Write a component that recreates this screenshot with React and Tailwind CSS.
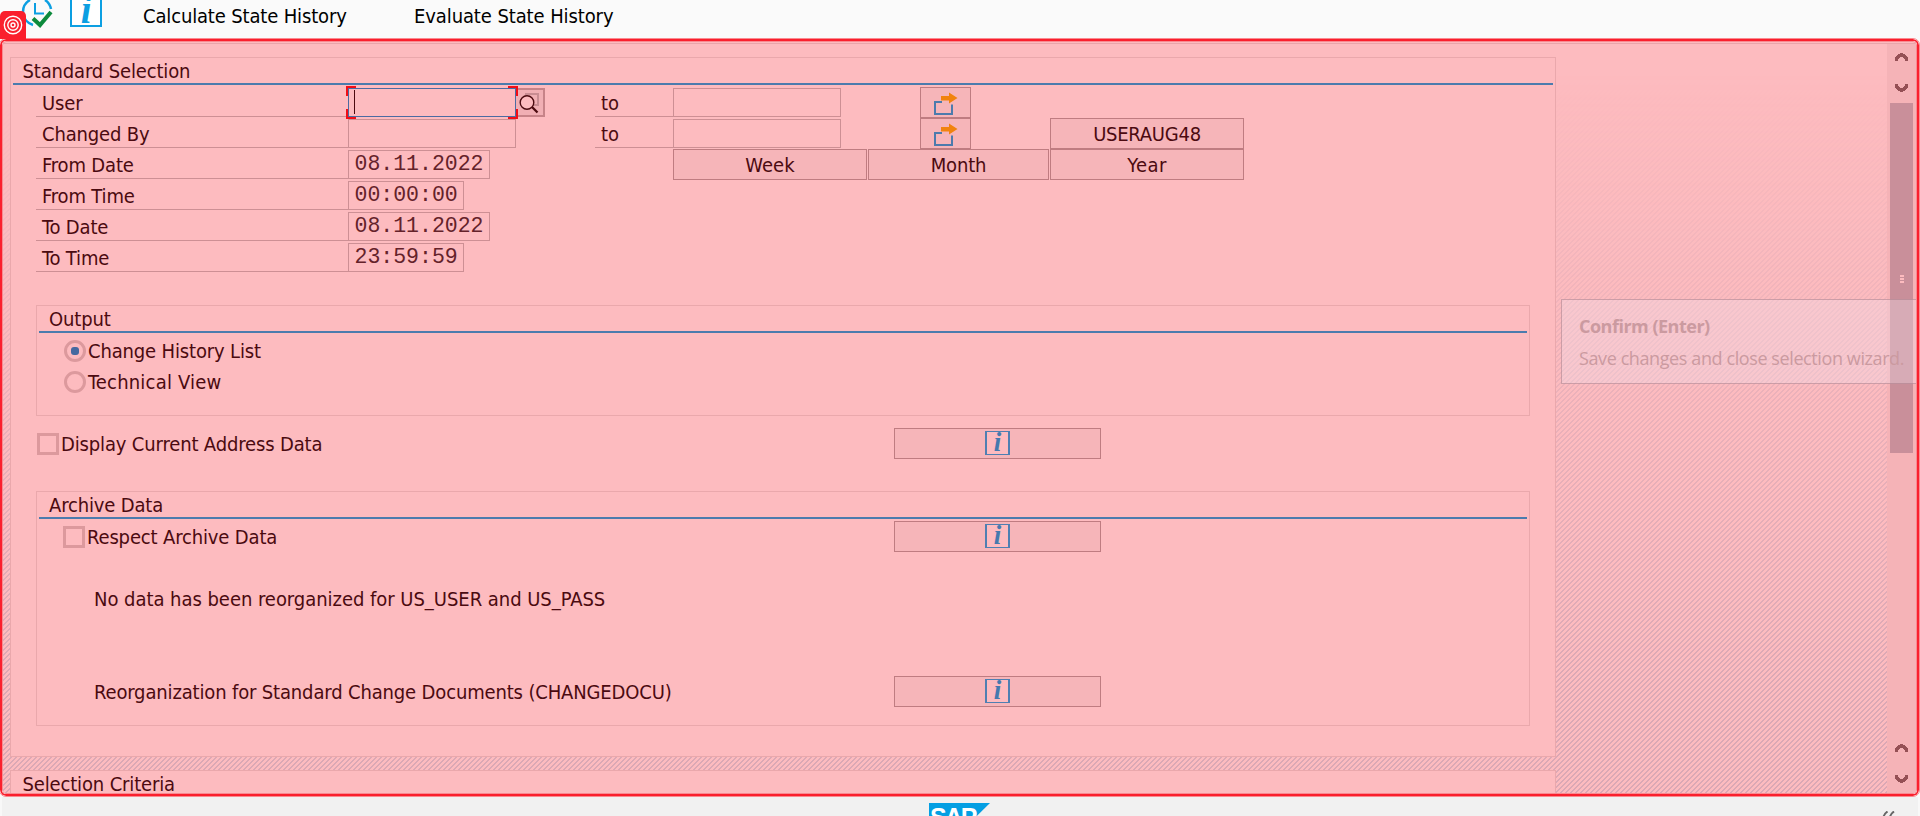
import React from "react";

const line = "border-[#cd8f94]";
const group = "border-[#eaa8ac]";

function Label({ children, className = "" }) {
  return <span className={`block whitespace-nowrap leading-[24px] ${className}`}>{children}</span>;
}

/* Caption cell of a selection row, underlined up to the input field */
function Caption({ children, className = "w-[312px]" }) {
  return (
    <div className={`h-[30px] shrink-0 border-b ${line} pl-1.5 pt-1 ${className}`}>
      <Label>{children}</Label>
    </div>
  );
}

function Field({ children, className = "w-[168px]" }) {
  return (
    <div className={`mt-[1px] h-[29px] shrink-0 whitespace-nowrap border ${line} pl-[5.5px] font-['Liberation_Mono',monospace] text-[21.5px] leading-[27px] tracking-normal text-[#64222a] ${className}`}>
      {children}
    </div>
  );
}

function Button({ children, className = "" }) {
  return (
    <div className={`flex h-[31px] shrink-0 items-center justify-center whitespace-nowrap border border-[#bf7c81] bg-[#f6b5b9] ${className}`}>
      {children}
    </div>
  );
}

function ShareButton() {
  return (
    <Button className="ml-[79px] w-[51px]">
      <svg width="26" height="26" viewBox="0 0 26 26" className="mt-0.5 shrink-0">
        <path d="M9 11H2v12h17v-9.500" fill="none" stroke="#4c7bad" strokeWidth="2" />
        <path d="M8 5h8V1.500l8.500 5.500-8.500 5.500V9.500H8z" fill="#f1830f" />
      </svg>
    </Button>
  );
}

function InfoButton() {
  return (
    <Button className="w-[207px]">
      <span className="mb-[1px] flex h-6 w-[25px] items-center justify-center border-2 border-y-[1px] border-[#4f7fb2] bg-[#fdbbbf] font-['Liberation_Serif',serif] text-[27px] font-bold italic leading-none text-[#4679ae]">
        <span className="-mt-0.5">i</span>
      </span>
    </Button>
  );
}

function Group({ title, className = "", children }) {
  return (
    <section className={`w-[1494px] border ${group} ${className}`}>
      <div className="ml-0.5 h-[27px] w-[1488px] border-b-2 border-[#4c7bad] pl-[10px] pt-[0.5px]">
        <Label>{title}</Label>
      </div>
      {children}
    </section>
  );
}

function Radio({ checked, children }) {
  return (
    <div className="flex h-[31px] items-center gap-[2px] pl-[27px]">
      <span className="flex size-[22px] items-center justify-center rounded-full border-[3px] border-[#dc999d]">
        {checked && <span className="size-2 rounded-[3px] bg-[#4669a0]" />}
      </span>
      {children}
    </div>
  );
}

function Check({ children, className = "" }) {
  return (
    <div className={`flex items-center gap-[2px] ${className}`}>
      <span className="size-[22px] border-[3px] border-[#dc999d]" />
      <Label className="tracking-[-0.15px]">{children}</Label>
    </div>
  );
}

function Chevron({ down }) {
  return (
    <svg width="13" height="8" viewBox="0 0 13 8" shapeRendering="crispEdges" className={`block shrink-0 ${down ? "rotate-180" : ""}`}>
      <path d="M5 0h3v1h2v1h1v1h1v1h1v4h-3V6H9V5H8V4H5v1H4v1H3v2H0V4h1V3h1V2h1V1h2z" fill="#955055" />
    </svg>
  );
}

function FocusedField() {
  return (
    <div className="relative z-10 mt-[1px] h-[29px] w-[168px] shrink-0 border border-[#4c6ba2] bg-[#fdbbbf] pl-[5px] pt-[1px]">
      <div className="h-6 w-[1px] bg-[#4b0a10]" />
      <svg width="172" height="33" viewBox="0 0 172 33" className="absolute -left-[3px] -top-[3px]" shapeRendering="crispEdges">
        <path d="M1 10V1H10M162 1h9V10M171 23v9H162M10 32H1v-9" fill="none" stroke="#f20d17" strokeWidth="2" />
      </svg>
    </div>
  );
}

function SearchHelp() {
  return (
    <div className="mt-[1px] h-[29px] w-[29px] shrink-0 border-2 border-l-0 border-[#c78388] bg-[#f1afb4]">
      <svg width="27" height="25" viewBox="0 0 27 25" fill="none" className="block">
        <path d="M10 8V4h12v11h-5" stroke="#c98c92" strokeWidth="2" />
        <circle cx="11" cy="12.500" r="6.800" stroke="#4b0a10" strokeWidth="1.400" fill="#fdbbbf" />
        <path d="M16 17l5.500 5.500" stroke="#4b0a10" strokeWidth="2.300" />
      </svg>
    </div>
  );
}

const times = [
  ["From Time", "00:00:00", "w-[116px]"],
  ["To Date", "08.11.2022", "w-[142px]"],
  ["To Time", "23:59:59", "w-[116px]"],
];

export default function App() {
  return (
    <div className="relative flex h-[816px] w-[1920px] flex-col overflow-hidden bg-[#fafafa] font-['DejaVu_Sans_Condensed','DejaVu_Sans',sans-serif] text-[20px] tracking-[-0.15px] text-[#4b0a10] [font-stretch:condensed]">
      <header className="flex h-[38px] shrink-0 text-black">
        <svg width="36" height="30" viewBox="0 0 36 30" className="ml-[20px] shrink-0">
          <path d="M13 25A14 14 0 0 1 3 13A14 14 0 0 1 10 0M25 0A14 14 0 0 1 31 9" fill="none" stroke="#0c9fe2" strokeWidth="2.500" />
          <path d="M15 3v10.500h9" fill="none" stroke="#0c9fe2" strokeWidth="2" />
          <path d="M13 18.500l7 6.500L31 12" fill="none" stroke="#0c8a3c" strokeWidth="4" />
        </svg>
        <div className="ml-[14px] flex h-[27px] w-[32px] shrink-0 items-end justify-center border-2 border-t-0 border-[#0c9fe2] bg-white font-['Liberation_Serif',serif] text-[39px] font-bold italic leading-[31px] text-[#0c9fe2]">
          i
        </div>
        <Label className="ml-[41px] w-[271px] pt-1">Calculate State History</Label>
        <Label className="pt-1 tracking-[-0.1px]">Evaluate State History</Label>
      </header>

      <main className="relative -ml-[1px] h-[759px] w-[1921px] shrink-0 overflow-hidden rounded-[7px] border border-[#f98a90]">
        <div className="h-full overflow-hidden rounded-[6px] border-2 border-[#fa1f2d]">
          <div className="relative flex h-full overflow-hidden rounded-[4px] border border-[#f88a91] bg-[#fdbbbf]">
            <div className="absolute inset-0 bg-[repeating-linear-gradient(135deg,#fdbbbf_0,#fdbbbf_1.6px,#dba8b5_1.6px,#dba8b5_3.5355px)] [mask-image:linear-gradient(to_bottom,transparent_30px,black_640px)]" />
            <div className="relative mt-[1px] w-[1884px] shrink-0 border-t border-[#e8a5aa] pl-[7px] pt-[13px]">
              <section className={`h-[700px] w-[1546px] border ${group} bg-[#fdbbbf]`}>
                <div className="ml-0.5 h-[27px] w-[1540px] border-b-2 border-[#4c7bad] pl-[9.5px] pt-[0.5px]">
                  <Label>Standard Selection</Label>
                </div>
                <div className="flex flex-col pl-[25px] pt-[2px]">
                  <div className="flex h-[31px]">
                    <div className="flex w-[559px]">
                      <Caption>User</Caption>
                      <FocusedField />
                      <SearchHelp />
                    </div>
                    <Caption className="w-[78px]">to</Caption>
                    <Field />
                    <ShareButton />
                  </div>
                  <div className="flex h-[31px]">
                    <div className="flex w-[559px]">
                      <Caption>Changed By</Caption>
                      <Field />
                    </div>
                    <Caption className="w-[78px]">to</Caption>
                    <Field />
                    <ShareButton />
                    <Button className="ml-[79px] w-[194px] tracking-[-0.25px]">USERAUG48</Button>
                  </div>
                  <div className="flex h-[31px]">
                    <div className="flex w-[637px]">
                      <Caption>From Date</Caption>
                      <Field className="w-[142px]">08.11.2022</Field>
                    </div>
                    <div className="flex gap-[1px]">
                      <Button className="w-[194px] tracking-[0.1px]">Week</Button>
                      <Button className="w-[181px]">Month</Button>
                      <Button className="w-[194px] tracking-[0.4px]">Year</Button>
                    </div>
                  </div>
                  {times.map(([name, value, width]) => (
                    <div key={name} className="flex h-[31px]">
                      <Caption>{name}</Caption>
                      <Field className={width}>{value}</Field>
                    </div>
                  ))}

                  <Group title="Output" className="mt-8 h-[111px] pb-4">
                    <div className="pt-[2px]">
                      <Radio checked>
                        <Label>Change History List</Label>
                      </Radio>
                      <Radio>
                        <Label className="tracking-[0.2px]">Technical View</Label>
                      </Radio>
                    </div>
                  </Group>

                  <div className="mt-3 flex pl-[1px]">
                    <Check className="w-[857px]">Display Current Address Data</Check>
                    <InfoButton />
                  </div>

                  <Group title="Archive Data" className="mt-8 h-[235px]">
                    <div className="flex pl-[26px] pt-[2px]">
                      <Check className="w-[831px]">Respect Archive Data</Check>
                      <InfoButton />
                    </div>
                    <div className="mt-[31px] flex h-[31px] items-center pl-[57px]">
                      <Label className="tracking-[-0.04px]">No data has been reorganized for US_USER and US_PASS</Label>
                    </div>
                    <div className="mt-[62px] flex items-center pl-[57px]">
                      <Label className="w-[800px]">Reorganization for Standard Change Documents (CHANGEDOCU)</Label>
                      <InfoButton />
                    </div>
                  </Group>
                </div>
              </section>
              <section className={`mt-[13px] h-[60px] w-[1546px] border ${group} bg-[#fdbbbf] pl-[11.5px] pt-[1px]`}>
                <Label>Selection Criteria</Label>
              </section>
            </div>

            <div className="relative mt-[1px] flex w-[29px] shrink-0 flex-col items-center border-t border-[#e8a5aa] bg-[#f5b3b7] pb-[10px] pt-[9px]">
              <Chevron />
              <div className="mt-[23px]">
                <Chevron down />
              </div>
              <div className="mt-[11px] flex h-[350px] w-[23px] flex-col items-center justify-center gap-[1px] bg-[#c98f9a] pt-0.5">
                <div className="h-0.5 w-1 bg-[#fdbbbf]" />
                <div className="h-0.5 w-1 bg-[#fdbbbf]" />
                <div className="h-0.5 w-1 bg-[#fdbbbf]" />
              </div>
              <div className="mt-auto">
                <Chevron />
              </div>
              <div className="mt-[23px]">
                <Chevron down />
              </div>
            </div>

            <div className="absolute left-[1558px] top-[257px] h-[85px] w-[370px] border border-[#a4747f]/50 bg-[#f0e0ec]/35 pl-[17px] pt-[13px] font-['Open_Sans',sans-serif] text-[18px] leading-[26px] text-[#cb9aa0] [font-stretch:normal]">
              <div className="whitespace-nowrap font-bold tracking-[-0.5px]">Confirm (Enter)</div>
              <div className="mt-[6px] whitespace-nowrap tracking-[-0.4px]">Save changes and close selection wizard.</div>
            </div>
          </div>
        </div>
      </main>

      <footer className="flex h-[19px] shrink-0 overflow-hidden border-x-2 border-[#f8f8f8] bg-[#f1f1f1]">
        <div className="ml-[927px] mt-[6px] h-[30px] w-[61px] shrink-0 bg-[#049fe3] pl-[1px] pt-[1px] font-['Liberation_Sans',sans-serif] text-[25px] font-bold leading-[26px] tracking-[-2px] text-white [clip-path:polygon(0_0,100%_0,50%_100%,0_100%)]">
          SAP
        </div>
        <svg width="14" height="6" viewBox="0 0 14 6" className="ml-[892px] mt-[14px] shrink-0">
          <path d="M1.500 6Q2 3 5.500 .5M8 6Q8.500 3 12 .5" fill="none" stroke="#666" strokeWidth="2" />
        </svg>
      </footer>

      <div className="absolute left-0 top-[11px] flex h-[28px] w-[26px] items-center justify-center rounded-t-[5px] bg-[#fa1f2d]">
        <svg width="20" height="20" viewBox="0 0 20 20" fill="none" stroke="#fff" strokeWidth="1.400">
          <circle cx="10" cy="10" r="8.700" />
          <circle cx="10" cy="10" r="5.200" />
          <circle cx="10" cy="10" r="2" />
        </svg>
      </div>
    </div>
  );
}
